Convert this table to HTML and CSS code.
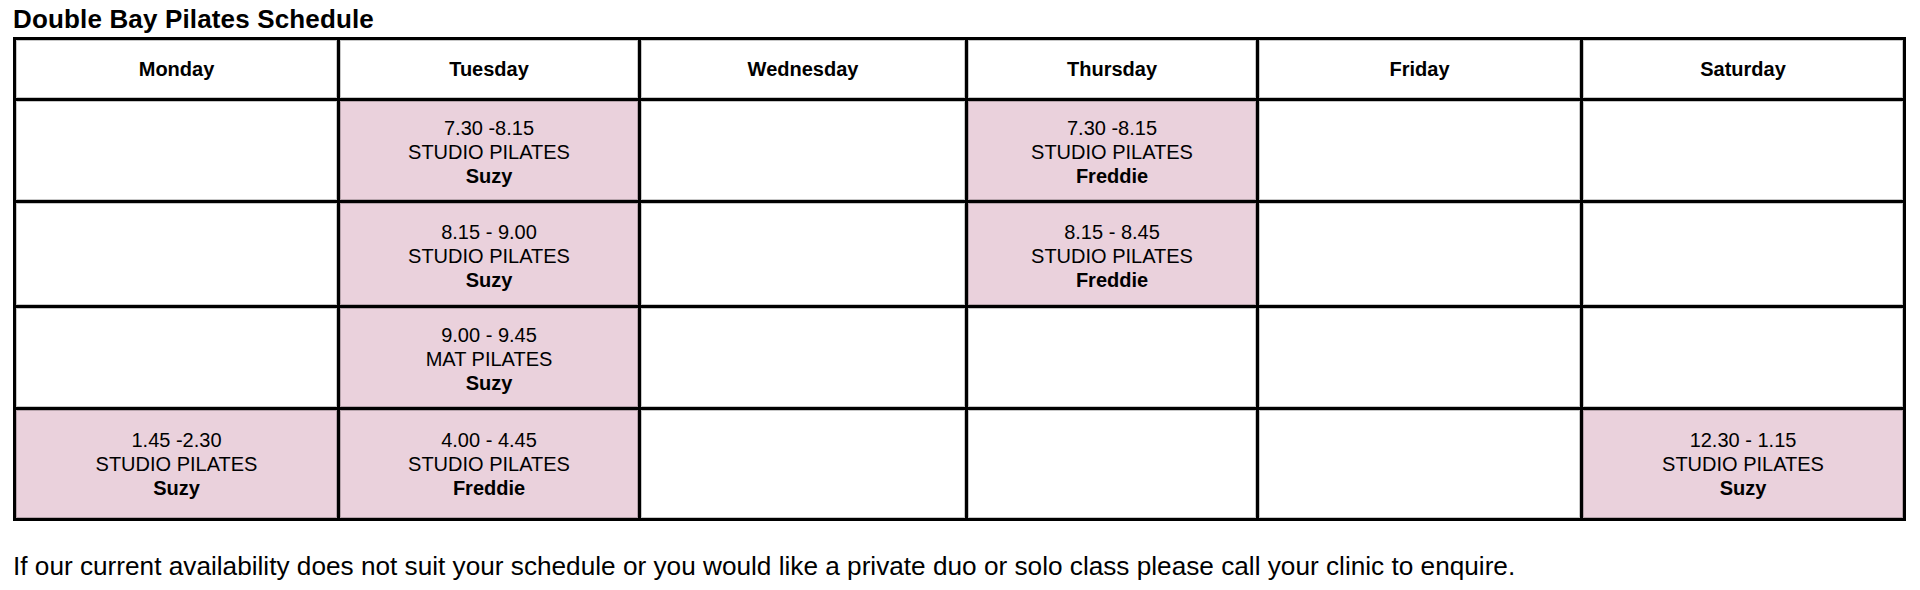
FILE: index.html
```html
<!DOCTYPE html>
<html lang="en">
<head>
<meta charset="utf-8">
<title>Double Bay Pilates Schedule</title>
<link rel="stylesheet" href="styles.css">
</head>
<body>
<div class="page">
  <h1 class="title">Double Bay Pilates Schedule</h1>
  <table class="schedule">
    <thead>
      <tr class="row-head">
        <th class="c-mon">Monday</th>
        <th class="c-tue">Tuesday</th>
        <th class="c-wed">Wednesday</th>
        <th class="c-thu">Thursday</th>
        <th class="c-fri">Friday</th>
        <th class="c-sat">Saturday</th>
      </tr>
    </thead>
    <tbody>
      <tr class="row-1">
        <td></td>
        <td class="booked">7.30 -8.15<br>STUDIO PILATES<br><b>Suzy</b></td>
        <td></td>
        <td class="booked">7.30 -8.15<br>STUDIO PILATES<br><b>Freddie</b></td>
        <td></td>
        <td></td>
      </tr>
      <tr class="row-2">
        <td></td>
        <td class="booked">8.15 - 9.00<br>STUDIO PILATES<br><b>Suzy</b></td>
        <td></td>
        <td class="booked">8.15 - 8.45<br>STUDIO PILATES<br><b>Freddie</b></td>
        <td></td>
        <td></td>
      </tr>
      <tr class="row-3">
        <td></td>
        <td class="booked">9.00 - 9.45<br>MAT PILATES<br><b>Suzy</b></td>
        <td></td>
        <td></td>
        <td></td>
        <td></td>
      </tr>
      <tr class="row-4">
        <td class="booked">1.45 -2.30<br>STUDIO PILATES<br><b>Suzy</b></td>
        <td class="booked">4.00 - 4.45<br>STUDIO PILATES<br><b>Freddie</b></td>
        <td></td>
        <td></td>
        <td></td>
        <td class="booked">12.30 - 1.15<br>STUDIO PILATES<br><b>Suzy</b></td>
      </tr>
    </tbody>
  </table>
  <p class="note">If our current availability does not suit your schedule or you would like a private duo or solo class please call your clinic to enquire.</p>
</div>
</body>
</html>
```

FILE: styles.css
```css
html, body {
  margin: 0;
  padding: 0;
  background: #ffffff;
}

body {
  font-family: "Liberation Sans", Arial, sans-serif;
  color: #000000;
}

.page {
  padding: 4px 13px 0;
}

.title {
  margin: 0 0 3px;
  font-size: 26px;
  line-height: 30px;
  font-weight: bold;
  letter-spacing: 0.15px;
}

.schedule {
  border-collapse: separate;
  border-spacing: 0;
  table-layout: fixed;
  width: 1893px;
  border-top: 3px solid #000;
  border-left: 3px solid #000;
}

.schedule th,
.schedule td {
  box-sizing: border-box;
  padding: 0;
  border-right: 3px solid #000;
  border-bottom: 3px solid #000;
  box-shadow: inset 0 0 0 1px rgba(0, 0, 0, 0.22);
  text-align: center;
  vertical-align: middle;
  font-size: 20px;
  line-height: 24px;
}

.schedule td {
  padding-top: 3px;
}

.schedule .row-4 td {
  padding-top: 0;
}

.schedule th {
  font-weight: bold;
}

.schedule b {
  font-weight: bold;
}

.c-mon { width: 324px; }
.c-tue { width: 301px; }
.c-wed { width: 327px; }
.c-thu { width: 291px; }
.c-fri { width: 324px; }
.c-sat { width: 323px; }

.row-head { height: 61px; }
.row-1 { height: 102px; }
.row-2 { height: 105px; }
.row-3 { height: 102px; }
.row-4 { height: 111px; }

.booked {
  background: #ead1dc;
}

.note {
  margin: 30px 0 0;
  font-size: 26.2px;
  line-height: 30px;
}
```
